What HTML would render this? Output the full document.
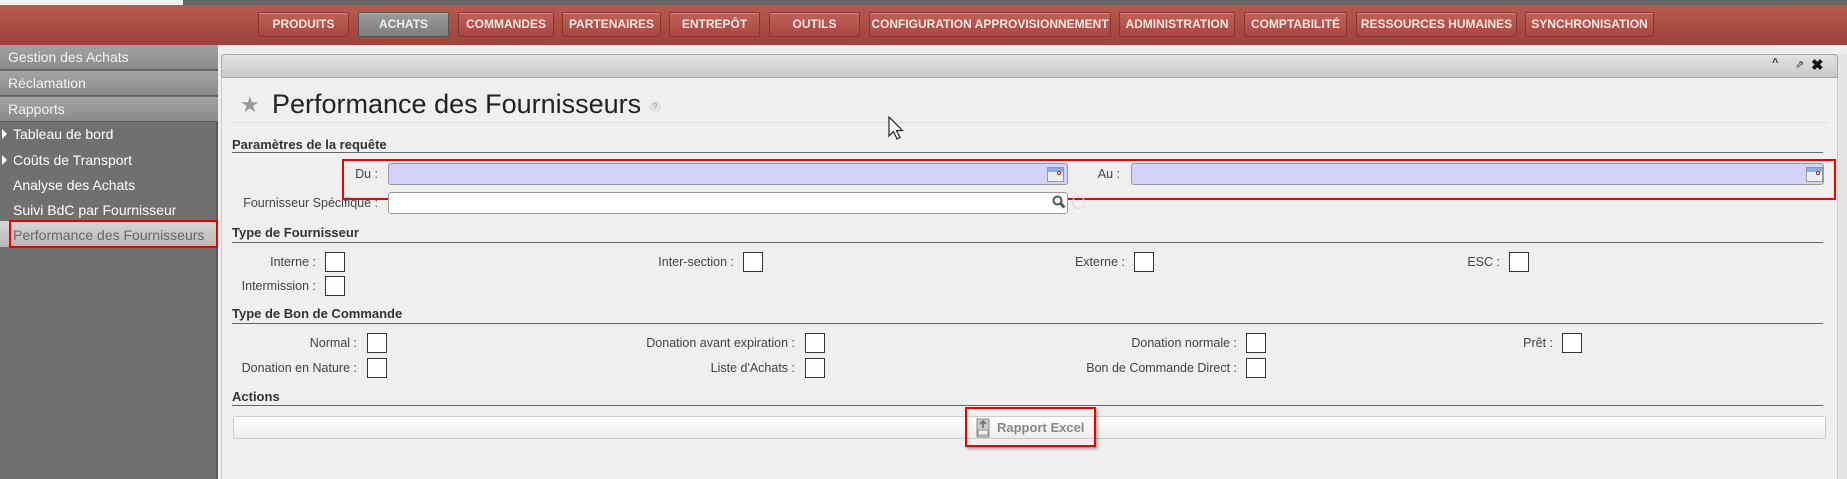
<!DOCTYPE html>
<html><head><meta charset="utf-8"><style>
*{box-sizing:border-box;margin:0;padding:0}
body{width:1847px;height:479px;overflow:hidden;background:#efeded;font-family:"Liberation Sans",Arial,sans-serif;position:relative}
.a{position:absolute}
.btn{position:absolute;top:12px;height:25px;border:1px solid #8a3530;border-radius:2px;background:linear-gradient(#c0625a,#a8463f);color:#f3e6e4;font-size:12px;font-weight:bold;text-align:center;line-height:23px;box-shadow:inset 0 1px 0 rgba(255,255,255,.25)}
.sb{position:absolute;left:0;width:218px;height:25px;background:linear-gradient(#a3a3a3,#8a8a8a);border-bottom:1px solid #5f5f5f;color:#f2f2f2;font-size:14px;line-height:25px;padding-left:8px}
.it{position:absolute;left:13px;color:#fff;font-size:14px}
.lbl{position:absolute;font-size:12.5px;color:#444;text-align:right}
.cb{position:absolute;width:20px;height:20px;border:1px solid #333;background:#fff}
.sec{position:absolute;left:232px;font-size:13px;font-weight:bold;color:#333}
.ln{position:absolute;left:232px;width:1591px;height:1px;background:#666}
.cal{position:absolute;width:17px;height:15px;background:linear-gradient(#8ab0e0 0 30%,#eee 30%);border:1px solid #999}
</style></head><body>
<div class="a" style="left:0;top:0;width:1847px;height:6px;background:#666"></div>
<div class="a" style="left:0;top:0;width:183px;height:6px;background:#f0f0f0"></div>
<div class="a" style="left:0;top:5px;width:1847px;height:40px;background:linear-gradient(#b75a50,#9f423b)"></div>
<div class="btn" style="left:258px;width:91px">PRODUITS</div>
<div class="btn" style="left:358px;width:91px;background:linear-gradient(#9a9a9a,#7e7e7e);border-color:#555;color:#eee">ACHATS</div>
<div class="btn" style="left:458px;width:96px">COMMANDES</div>
<div class="btn" style="left:562px;width:99px">PARTENAIRES</div>
<div class="btn" style="left:669px;width:91px">ENTREPÔT</div>
<div class="btn" style="left:769px;width:91px">OUTILS</div>
<div class="btn" style="left:869px;width:242px">CONFIGURATION APPROVISIONNEMENT</div>
<div class="btn" style="left:1119px;width:116px">ADMINISTRATION</div>
<div class="btn" style="left:1244px;width:103px">COMPTABILITÉ</div>
<div class="btn" style="left:1356px;width:161px">RESSOURCES HUMAINES</div>
<div class="btn" style="left:1525px;width:129px">SYNCHRONISATION</div>

<div class="a" style="left:0;top:45px;width:218px;height:434px;background:#707070;border-right:2px solid #5a5a5a"></div>
<div class="sb" style="top:45px">Gestion des Achats</div>
<div class="sb" style="top:71px">Réclamation</div>
<div class="sb" style="top:97px">Rapports</div>
<div class="a" style="left:2px;top:129px;width:0;height:0;border-left:5px solid #fff;border-top:5px solid transparent;border-bottom:5px solid transparent"></div>
<div class="it" style="top:126px">Tableau de bord</div>
<div class="a" style="left:2px;top:155px;width:0;height:0;border-left:5px solid #fff;border-top:5px solid transparent;border-bottom:5px solid transparent"></div>
<div class="it" style="top:152px">Coûts de Transport</div>
<div class="it" style="top:177px">Analyse des Achats</div>
<div class="it" style="top:202px">Suivi BdC par Fournisseur</div>
<div class="a" style="left:0;top:221px;width:217px;height:26px;background:linear-gradient(#d6d6d6,#b8b8b8)"></div>
<div class="it" style="top:227px;color:#666">Performance des Fournisseurs</div>
<div class="a" style="left:9px;top:220px;width:209px;height:28px;border:2px solid #e00"></div>

<div class="a" style="left:221px;top:54px;width:1617px;height:425px;background:#f0eeee;border-left:1px solid #ccc;border-right:1px solid #ccc"></div>
<div class="a" style="left:221px;top:54px;width:1617px;height:24px;background:linear-gradient(#e2e2e2,#c9c9c9);border:1px solid #aaa;border-radius:4px 4px 0 0"></div>
<div class="a" style="left:1772px;top:57px;font-size:11px;color:#333;font-weight:bold">^</div>
<div class="a" style="left:1795px;top:58px;font-size:11px;color:#333">⇗</div>
<div class="a" style="left:1811px;top:56px;font-size:15px;font-weight:bold;color:#111">✖</div>
<div class="a" style="left:1838px;top:54px;width:9px;height:425px;background:#e4e4e4"></div>

<div class="a" style="left:240px;top:92px;font-size:22px;color:#999">★</div>
<div class="a" style="left:272px;top:89px;font-size:27px;color:#222">Performance des Fournisseurs</div>
<div class="a" style="left:649px;top:101px;width:12px;height:12px;border-radius:6px;background:#e2e2e2;font-size:8px;color:#999;text-align:center;line-height:12px">?</div>
<div class="a" style="left:232px;top:122px;width:1596px;height:1px;background:#ddd"></div>

<div class="sec" style="top:137px">Paramètres de la requête</div>
<div class="ln" style="top:152px"></div>
<div class="lbl" style="left:340px;width:38px;top:167px">Du :</div>
<div class="a" style="left:388px;top:163px;width:680px;height:22px;background:#d2d2fa;border:1px solid #999;border-radius:3px"></div>
<div class="cal" style="left:1047px;top:167px"><div style="margin:3px 0 0 9px;width:4px;height:4px;border:1px solid #b22;border-radius:2px"></div></div>
<div class="lbl" style="left:1090px;width:30px;top:167px">Au :</div>
<div class="a" style="left:1131px;top:163px;width:693px;height:22px;background:#d2d2fa;border:1px solid #999;border-radius:3px"></div>
<div class="cal" style="left:1806px;top:167px"><div style="margin:3px 0 0 9px;width:4px;height:4px;border:1px solid #b22;border-radius:2px"></div></div>
<div class="a" style="left:342px;top:159px;width:1494px;height:41px;border:2px solid #e00"></div>
<div class="lbl" style="left:226px;width:152px;top:196px">Fournisseur Spécifique :</div>
<div class="a" style="left:388px;top:192px;width:680px;height:22px;background:#fff;border:1px solid #999;border-radius:3px"></div>
<svg class="a" style="left:1052px;top:195px" width="14" height="14" viewBox="0 0 14 14"><circle cx="5.5" cy="5.5" r="4" fill="none" stroke="#555" stroke-width="2"/><path d="M8.5 8.5 L12.5 12.5" stroke="#555" stroke-width="3"/></svg>
<div class="a" style="left:1072px;top:196px;width:13px;height:13px;border-radius:7px;border:1px solid #ddd"></div>

<div class="sec" style="top:225px">Type de Fournisseur</div>
<div class="ln" style="top:242px"></div>
<div class="lbl" style="left:230px;width:86px;top:255px">Interne :</div><div class="cb" style="left:325px;top:252px"></div>
<div class="lbl" style="left:600px;width:134px;top:255px">Inter-section :</div><div class="cb" style="left:743px;top:252px"></div>
<div class="lbl" style="left:1000px;width:125px;top:255px">Externe :</div><div class="cb" style="left:1134px;top:252px"></div>
<div class="lbl" style="left:1400px;width:100px;top:255px">ESC :</div><div class="cb" style="left:1509px;top:252px"></div>
<div class="lbl" style="left:230px;width:86px;top:279px">Intermission :</div><div class="cb" style="left:325px;top:276px"></div>

<div class="sec" style="top:306px">Type de Bon de Commande</div>
<div class="ln" style="top:323px"></div>
<div class="lbl" style="left:230px;width:127px;top:336px">Normal :</div><div class="cb" style="left:367px;top:333px"></div>
<div class="lbl" style="left:560px;width:235px;top:336px">Donation avant expiration :</div><div class="cb" style="left:805px;top:333px"></div>
<div class="lbl" style="left:1000px;width:237px;top:336px">Donation normale :</div><div class="cb" style="left:1246px;top:333px"></div>
<div class="lbl" style="left:1450px;width:103px;top:336px">Prêt :</div><div class="cb" style="left:1562px;top:333px"></div>
<div class="lbl" style="left:230px;width:127px;top:361px">Donation en Nature :</div><div class="cb" style="left:367px;top:358px"></div>
<div class="lbl" style="left:560px;width:235px;top:361px">Liste d'Achats :</div><div class="cb" style="left:805px;top:358px"></div>
<div class="lbl" style="left:1000px;width:237px;top:361px">Bon de Commande Direct :</div><div class="cb" style="left:1246px;top:358px"></div>

<div class="sec" style="top:389px">Actions</div>
<div class="ln" style="top:405px"></div>
<div class="a" style="left:233px;top:416px;width:1593px;height:23px;background:linear-gradient(#fff,#ececec);border:1px solid #ccc;border-radius:3px"></div>
<svg class="a" style="left:975px;top:418px" width="16" height="20" viewBox="0 0 16 20"><rect x="2" y="1" width="12" height="18" fill="#ccc" stroke="#888"/><path d="M8 3 L8 10 M5 6 L8 3 L11 6" stroke="#666" fill="none" stroke-width="1.5"/><rect x="3" y="12" width="10" height="5" fill="#eee" stroke="#999"/></svg>
<div class="a" style="left:997px;top:420px;font-size:13px;font-weight:bold;color:#888">Rapport Excel</div>
<div class="a" style="left:965px;top:407px;width:131px;height:40px;border:2px solid #e00;box-shadow:2px 2px 3px rgba(0,0,0,.3)"></div>

<svg class="a" style="left:888px;top:116px" width="18" height="26" viewBox="0 0 18 26"><path d="M1 1 L1 20 L5.5 15.5 L9 23 L12 21.5 L8.5 14.5 L14.5 14.5 Z" fill="#fff" stroke="#222" stroke-width="1.2"/></svg>
</body></html>
